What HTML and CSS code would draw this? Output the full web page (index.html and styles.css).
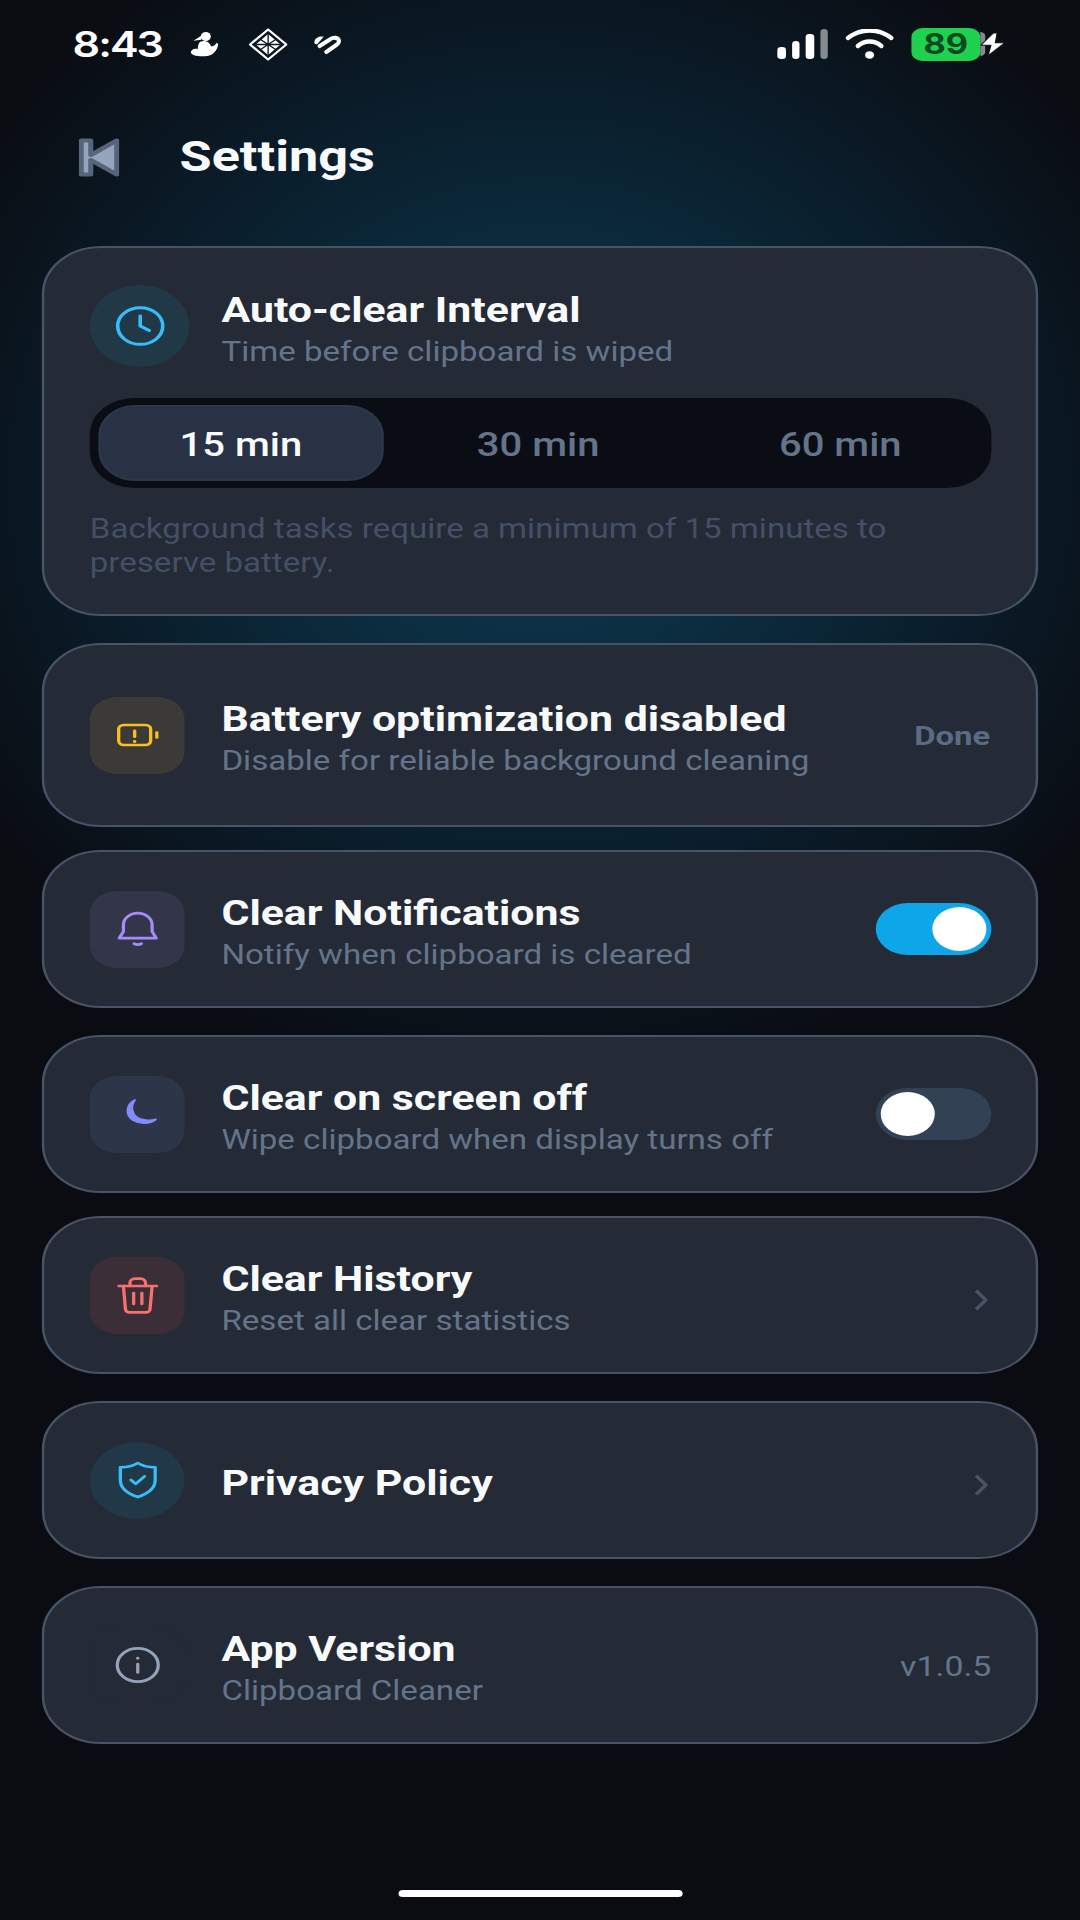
FILE: index.html
```html
<!DOCTYPE html>
<html lang="en">
<head>
<meta charset="utf-8">
<title>Settings</title>
<link rel="stylesheet" href="styles.css">
</head>
<body>
<div class="app">
  <div class="status">
    <span class="time">8:43</span>
    <svg class="st-figure" viewBox="0 0 80 80" preserveAspectRatio="none"><circle cx="43" cy="17" r="14" fill="#fff"/><path d="M32 13 L8 30 L30 27Z" fill="#fff"/><path d="M26 34 C38 26 54 32 58 48 C66 46 70 42 74 36 L78 40 C76 60 62 78 40 78 C22 78 4 76 0 66 C2 56 12 52 20 56 C20 48 22 40 26 34Z" fill="#fff"/></svg>
    <svg class="st-diamond" viewBox="0 0 38 33" preserveAspectRatio="none"><path d="M19 1.5 L36.5 16.5 L19 31.5 L1.5 16.5Z" fill="none" stroke="#fff" stroke-width="2.2" stroke-linejoin="round"/><path d="M19 6 L31 16.5 L19 27 L7 16.500Z" fill="#fff"/><path d="M11 11 L27 22 M27 11 L11 22 M7 16.500 H31 M19 6 V27" fill="none" stroke="#0a1a24" stroke-width="1.300"/></svg>
    <svg class="st-stripes" viewBox="0 0 85 55" preserveAspectRatio="none"><path d="M2 22 C2 9 16 2 30 5 L12 25 C8 28 3 27 2 22Z" fill="#fff"/><path d="M18 32 L50 12 C60 5 74 8 76 16 C78 22 72 26 68 29 L38 49" fill="none" stroke="#fff" stroke-width="12" stroke-linecap="round" stroke-linejoin="round"/></svg>
    <span class="status-spacer"></span>
    <span class="signal"><i class="bar b1"></i><i class="bar b2"></i><i class="bar b3"></i><i class="bar b4"></i></span>
    <svg class="st-wifi" viewBox="0 0 50 30" preserveAspectRatio="none"><path d="M3 9 C16 -1 34 -1 47 9" fill="none" stroke="#fff" stroke-width="4.4" stroke-linecap="round"/><path d="M13 17 C20 11 30 11 37 17" fill="none" stroke="#fff" stroke-width="4.4" stroke-linecap="round"/><ellipse cx="25" cy="26" rx="4.6" ry="3.8" fill="#fff"/></svg>
    <span class="battery"><span class="battery-fill">89</span><i class="battery-tail"></i></span>
    <svg class="st-bolt" viewBox="0 0 25 24" preserveAspectRatio="none"><path d="M13 1 L1.700 12.700 H11 L8.300 22.700 L24 10.300 H15 L16.700 1Z" fill="#fff" stroke="#0a1016" stroke-width="1" stroke-linejoin="round"/></svg>
  </div>

  <header class="header">
    <svg class="back" viewBox="0 0 32 39" preserveAspectRatio="none"><path d="M2 2.500 H9.500 V17 L30 2.500 V36.500 L9.500 22 V36.500 H2Z" fill="#94a5bd" stroke="#566579" stroke-width="4" stroke-linejoin="round"/></svg>
    <h1 class="page-title">Settings</h1>
  </header>

  <main class="list">
    <section class="card card-interval">
      <div class="row">
        <span class="icon icon-round icon-sky-large">
          <svg viewBox="0 0 24 24" class="glyph glyph-clock stroke-sky"><circle cx="12" cy="12" r="10"/><path d="M12 6.5V12L16 14.5"/></svg>
        </span>
        <div class="texts">
          <div class="title">Auto-clear Interval</div>
          <div class="sub">Time before clipboard is wiped</div>
        </div>
      </div>
      <div class="segments">
        <div class="seg seg-active">15 min</div>
        <div class="seg">30 min</div>
        <div class="seg">60 min</div>
      </div>
      <p class="note">Background tasks require a minimum of 15 minutes to preserve battery.</p>
    </section>

    <section class="card card-battery spaced">
      <div class="row">
        <span class="icon icon-amber">
          <svg viewBox="0 0 24 24" class="glyph stroke-amber"><rect x="2.7" y="6" width="15.6" height="12" rx="2.5"/><path d="M21.3 10.5V13.5"/><path d="M10.5 9.5V13"/><path d="M10.5 15.8V16"/></svg>
        </span>
        <div class="texts">
          <div class="title">Battery optimization disabled</div>
          <div class="sub">Disable for reliable background cleaning</div>
        </div>
        <span class="done">Done</span>
      </div>
    </section>

    <section class="card">
      <div class="row">
        <span class="icon icon-violet">
          <svg viewBox="0 0 24 24" class="glyph stroke-violet"><path d="M3 17.5H21L19 13.5V9.5A7 7 0 0 0 5 9.5V13.5Z"/><path d="M10.2 20.8Q12 22 13.8 20.8"/></svg>
        </span>
        <div class="texts">
          <div class="title">Clear Notifications</div>
          <div class="sub">Notify when clipboard is cleared</div>
        </div>
        <span class="toggle toggle-on"><i class="knob"></i></span>
      </div>
    </section>

    <section class="card spaced">
      <div class="row">
        <span class="icon icon-indigo">
          <svg viewBox="0 0 24 24" class="glyph moon"><path d="M10.6 3.6C6.4 6.2 5.6 12.6 9.8 15.8C13.4 18.4 18 18 20.8 15.2C16.4 16.6 11.8 15.4 10 11.8C8.8 9 9.2 6 10.6 3.6Z"/></svg>
        </span>
        <div class="texts">
          <div class="title">Clear on screen off</div>
          <div class="sub">Wipe clipboard when display turns off</div>
        </div>
        <span class="toggle"><i class="knob"></i></span>
      </div>
    </section>

    <section class="card">
      <div class="row">
        <span class="icon icon-red">
          <svg viewBox="0 0 24 24" class="glyph stroke-red"><path d="M2.8 6.6H21.2"/><path d="M5 6.6L6 20.5A2 2 0 0 0 8 22.4H16A2 2 0 0 0 18 20.5L19 6.6"/><path d="M8.2 6.6V4.6A2.4 2.4 0 0 1 10.6 2.2H13.4A2.4 2.4 0 0 1 15.8 4.6V6.6"/><path d="M10 10.8V17.4"/><path d="M14 10.8V17.4"/></svg>
        </span>
        <div class="texts">
          <div class="title">Clear History</div>
          <div class="sub">Reset all clear statistics</div>
        </div>
        <svg class="chevron" viewBox="0 0 11 22"><path d="M1.5 1.5L9.5 11L1.5 20.5"/></svg>
      </div>
    </section>

    <section class="card spaced">
      <div class="row">
        <span class="icon icon-round icon-sky">
          <svg viewBox="0 0 24 24" class="glyph stroke-sky"><path d="M12 1.8C14.5 3.8 17.5 4.4 20.5 4.4V12C20.5 17 16.5 20.4 12 22.2C7.500 20.400 3.500 17 3.500 12V4.400C6.500 4.400 9.500 3.800 12 1.800Z"/><path d="M8.700 12L11 14.300L15.300 9.800"/></svg>
        </span>
        <div class="texts">
          <div class="title">Privacy Policy</div>
        </div>
        <svg class="chevron" viewBox="0 0 11 22"><path d="M1.5 1.5L9.5 11L1.5 20.5"/></svg>
      </div>
    </section>

    <section class="card spaced">
      <div class="row">
        <span class="icon icon-slate">
          <svg viewBox="0 0 24 24" class="glyph stroke-slate"><circle cx="12" cy="12" r="10"/><path d="M12 11.500V16.500"/><path d="M12 7.800V8"/></svg>
        </span>
        <div class="texts">
          <div class="title">App Version</div>
          <div class="sub">Clipboard Cleaner</div>
        </div>
        <span class="version">v1.0.5</span>
      </div>
    </section>
  </main>

  <div class="home-bar"></div>
</div>
</body>
</html>
```

FILE: styles.css
```css
* { box-sizing: border-box; }
html, body { margin: 0; padding: 0; }
body {
  width: 1080px;
  height: 1920px;
  overflow: hidden;
  font-family: Roboto, "Liberation Sans", sans-serif;
  color: #f8fafc;
  background-color: #0a0c11;
  background-image: radial-gradient(ellipse 680px 620px at 540px 480px, #0d3a50 0%, #0b2c3e 35%, #0a1a26 70%, #0a0c11 100%);
}
.app {
  width: 878px;
  height: 1920px;
  transform: scaleX(1.23);
  transform-origin: 0 0;
  display: flex;
  flex-direction: column;
  padding: 0 34px;
}

/* status bar */
.status {
  display: flex;
  align-items: center;
  height: 32px;
  margin-top: 28px;
  padding-left: 25px;
  padding-right: 26px;
}
.time { font-family: Inter, sans-serif; font-size: 35px; font-weight: 600; color: #fff; width: 96px; flex: none; letter-spacing: -1.6px; line-height: 32px; }
.st-figure { width: 23px; height: 26px; flex: none; margin-right: 23.6px; }
.st-diamond { width: 32px; height: 33px; flex: none; margin-right: 21px; }
.st-stripes { width: 23px; height: 19px; flex: none; }
.status-spacer { flex: 1; }
.signal { display: flex; align-items: flex-end; gap: 4.9px; height: 30px; margin-right: 14px; }
.bar { display: block; width: 6.5px; background: #fff; border-radius: 3px; }
.b1 { height: 12px; }
.b2 { height: 18px; }
.b3 { height: 25px; }
.b4 { height: 30px; background: #858a8f; }
.st-wifi { width: 40px; height: 30px; flex: none; margin-right: 14px; }
.battery { display: flex; align-items: center; flex: none; }
.battery-fill {
  display: block;
  width: 56px;
  height: 33px;
  background: #1fd14f;
  border-radius: 9px;
  color: #0b4a20;
  font-family: Inter, sans-serif;
  font-size: 28px;
  font-weight: 700;
  line-height: 33px;
  text-align: center;
  font-variant-numeric: tabular-nums;
}
.battery-tail { display: block; width: 4px; height: 24px; background: #858a8f; border-radius: 0 4px 4px 0; }
.st-bolt { width: 22px; height: 25px; flex: none; margin-left: -5px; }

/* header */
.header {
  display: flex;
  align-items: center;
  gap: 49px;
  height: 40px;
  margin-top: 77px;
  padding-left: 30px;
}
.back { width: 33px; height: 39px; flex: none; }
.page-title { margin: 0; font-size: 42.4px; font-weight: 700; line-height: 40px; color: #f8fafc; }

/* cards */
.list { display: flex; flex-direction: column; gap: 23px; margin-top: 69px; }
.spaced { margin-top: 4px; }
.card {
  width: 810px;
  background: #242a36;
  border: 2px solid #475367;
  border-radius: 48px;
  padding: 38px 36px 38px 37px;
}
.card-interval { padding-top: 37px; padding-bottom: 34px; }
.card-battery { padding-top: 51px; padding-bottom: 51px; }
.row { display: flex; align-items: center; min-height: 78px; }
.icon {
  width: 77px;
  height: 77px;
  flex: none;
  border-radius: 22px;
  margin-right: 30px;
  display: flex;
  align-items: center;
  justify-content: center;
}
.icon-round { border-radius: 50%; }
.icon-sky-large { width: 81px; height: 82px; margin-right: 26px; background: #213847; }
.icon-sky { background: #203848; }
.icon-amber { background: #3b3a37; }
.icon-violet { background: #333649; }
.icon-indigo { background: #2d3549; }
.icon-red { background: #3b2e36; }
.icon-slate { background: #242b36; }
.glyph { width: 40px; height: 40px; fill: none; stroke-width: 1.6; stroke-linecap: round; stroke-linejoin: round; }
.glyph-clock { width: 44px; height: 44px; }
.stroke-sky { stroke: #38bdf8; }
.stroke-amber { stroke: #fbbf24; }
.stroke-violet { stroke: #a78bfa; }
.stroke-red { stroke: #f87171; }
.stroke-slate { stroke: #94a3b8; }
.moon { fill: #818cf8; stroke: #818cf8; stroke-width: 1; }
.texts { flex: 1; min-width: 0; padding-top: 3px; margin-bottom: -3px; }
.title { font-size: 34.8px; font-weight: 700; line-height: 41px; color: #f8fafc; }
.sub { font-size: 26.9px; font-weight: 400; line-height: 31px; color: #64748b; margin-top: 6px; }

/* segmented control */
.segments {
  display: flex;
  height: 90px;
  margin-top: 31px;
  background: #0a0d13;
  border-radius: 36px;
}
.seg {
  flex: 1;
  display: flex;
  align-items: center;
  justify-content: center;
  padding-top: 4px;
  margin: 7px;
  font-size: 32.5px;
  font-weight: 500;
  color: #64748b;
  border: 2px solid transparent;
  border-radius: 30px;
}
.seg-active { margin-right: 3px; background: #283244; border-color: #2c374b; color: #f8fafc; }
.note { margin: 24px 0 0; font-size: 26.9px; line-height: 34px; color: #435067; }

.done { font-size: 26.7px; font-weight: 700; color: #5b6b85; margin-right: 1px; padding-top: 2px; }
.version { font-size: 27.5px; color: #64748b; padding-top: 2px; }
.chevron { width: 11px; height: 22px; flex: none; margin: 10px 3px 0 0; fill: none; stroke: #475569; stroke-width: 3; }

.toggle {
  width: 94px;
  height: 52px;
  flex: none;
  border-radius: 26px;
  background: #334155;
  padding: 4px;
  display: flex;
}
.toggle-on { background: #0ea5e9; justify-content: flex-end; }
.knob { display: block; width: 44px; height: 44px; border-radius: 50%; background: #fff; }

.home-bar {
  width: 231px;
  height: 7px;
  border-radius: 4px;
  background: #fff;
  margin: auto auto 23px;
  align-self: center;
}
```
